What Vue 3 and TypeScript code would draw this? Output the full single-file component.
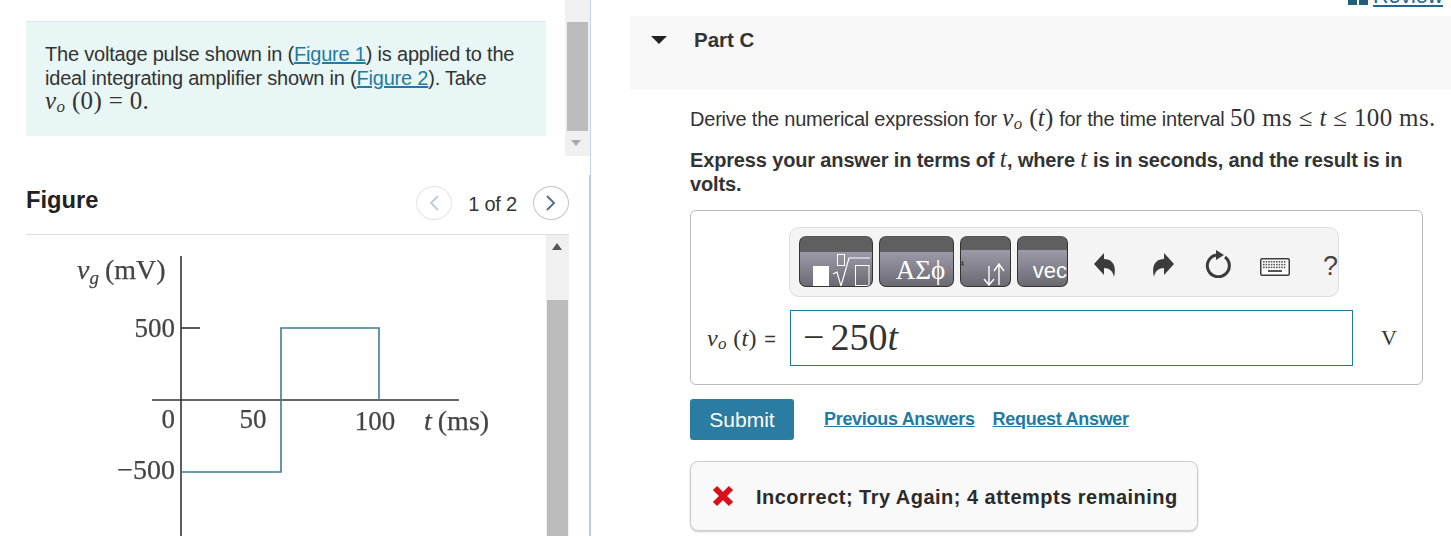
<script setup lang="ts">
// keyboard icon keys, drawn as rows of little squares
const keyRows: { x: number; y: number; w: number }[] = []
for (let r = 0; r < 3; r++) {
  for (let c = 0; c < 9; c++) {
    keyRows.push({ x: 3 + c * 2.6, y: 3 + r * 2.8, w: 1.6 })
  }
}
</script>

<template>
  <div class="page">
    <!-- left pane -->
    <div class="left">
      <div class="left-top">
        <div class="intro">
          <p>
            The voltage pulse shown in (<a href="#">Figure 1</a>) is applied to the<br />
            ideal integrating amplifier shown in (<a href="#">Figure 2</a>). Take<br />
            <span class="math"><i>v</i><sub><i>o</i></sub> (0) = 0.</span>
          </p>
        </div>
        <div class="scroll-a">
          <div class="scroll-a-thumb"></div>
          <div class="arrow-down"></div>
        </div>
      </div>

      <div class="left-bottom">
        <div class="fig-head">
          <h2>Figure</h2>
          <div class="pager">
            <span class="circle off">
              <svg width="12" height="18" viewBox="0 0 12 18"><path d="M10 2 L3 9 L10 16" fill="none" stroke="#c3cbd6" stroke-width="2" /></svg>
            </span>
            <span class="count">1 of 2</span>
            <span class="circle">
              <svg width="12" height="18" viewBox="0 0 12 18"><path d="M2 2 L9 9 L2 16" fill="none" stroke="#5b6f85" stroke-width="2" /></svg>
            </span>
          </div>
        </div>
        <div class="fig-body">
          <svg class="plot" width="520" height="301" viewBox="26 235 520 301">
            <g fill="none" stroke-width="1.6">
              <path d="M181 256 V536" stroke="#333" />
              <path d="M152 400 H459" stroke="#333" />
              <path d="M181 328 H200" stroke="#333" />
              <path d="M181 472 H281 V328 H379 V400" stroke="#3e7d92" />
            </g>
            <g class="plot-text" fill="#444" stroke="#444" stroke-width="0.25">
              <text x="77" y="279" font-size="28"><tspan font-style="italic">v</tspan><tspan font-style="italic" font-size="19" dy="5">g</tspan><tspan dy="-5" dx="6">(mV)</tspan></text>
              <text x="175" y="337" text-anchor="end" font-size="27">500</text>
              <text x="175" y="428" text-anchor="end" font-size="27">0</text>
              <text x="253" y="428" text-anchor="middle" font-size="27">50</text>
              <text x="375" y="430" text-anchor="middle" font-size="27">100</text>
              <text x="424" y="430" font-size="28"><tspan font-style="italic">t</tspan><tspan dx="6">(ms)</tspan></text>
              <text x="175" y="479" text-anchor="end" font-size="28">−500</text>
            </g>
          </svg>
          <div class="scroll-b">
            <div class="arrow-up"></div>
            <div class="scroll-b-thumb"></div>
          </div>
        </div>
      </div>
    </div>

    <!-- right pane -->
    <div class="right">
      <a class="review" href="#">
        <svg width="20" height="5" viewBox="0 0 20 5"><path d="M0 0 H9 V5 H0 Z M11 0 H20 V5 H11 Z" fill="#1f5f7a" /></svg>
        <span>Review</span>
      </a>

      <div class="part-head">
        <span class="caret"></span>
        <span class="part-title">Part C</span>
      </div>

      <div class="part-body">
        <p class="question">
          Derive the numerical expression for
          <span class="math"><i>v</i><sub><i>o</i></sub> (<i>t</i>)</span>
          for the time interval
          <span class="math">50 ms ≤ <i>t</i> ≤ 100 ms.</span>
        </p>
        <p class="express">
          Express your answer in terms of <span class="math normal"><i>t</i></span>, where
          <span class="math normal"><i>t</i></span> is in seconds, and the result is in volts.
        </p>

        <div class="answer">
          <div class="toolbar">
            <div class="btn b1">
              <svg width="74" height="36" viewBox="0 0 74 36">
                <rect x="14" y="16" width="16" height="20" fill="#fff" />
                <rect x="38.5" y="4.5" width="7" height="11" fill="none" stroke="#fff" />
                <path d="M34 24 L38 22 L42 36 L50 8 H71" fill="none" stroke="#fff" stroke-width="1.2" />
                <rect x="56.5" y="15.5" width="13.5" height="20" fill="none" stroke="#fff" />
              </svg>
            </div>
            <div class="btn b2"><span>ΑΣϕ</span></div>
            <div class="btn b3">
              <svg width="51" height="38" viewBox="0 0 51 38">
                <path d="M0 13 l3 3 M3 13 l-3 3 M1.5 12 v5" stroke="#333" stroke-width="0.7" />
                <path d="M28 17 V36 M23 30 L28 36 L33 30 M38 36 V15 M33 22 L38 15 L43 22" fill="none" stroke="#fff" stroke-width="1.4" />
              </svg>
            </div>
            <div class="btn b4"><span>vec</span></div>
            <div class="tools">
              <svg class="undo" width="22" height="26" viewBox="0 0 22 26"><path d="M0 12 L10 1 V7 C18 7 23 13 20 25 C19 19 15 16 10 16 V23 Z" fill="#3c3c3c" /></svg>
              <svg class="redo" width="22" height="26" viewBox="0 0 22 26"><path d="M22 12 L12 1 V7 C4 7 -1 13 2 25 C3 19 7 16 12 16 V23 Z" fill="#3c3c3c" /></svg>
              <svg class="reset" width="26" height="28" viewBox="0 0 26 28">
                <path d="M20 7 A11 11 0 1 1 11 5" fill="none" stroke="#3c3c3c" stroke-width="3" />
                <path d="M11 0 L19 5 L11 10 Z" fill="#3c3c3c" />
              </svg>
              <svg class="kbd" width="30" height="18" viewBox="0 0 30 18">
                <rect x="0.75" y="0.75" width="28.5" height="16.5" rx="1.5" fill="#fff" stroke="#3c3c3c" stroke-width="1.5" />
                <rect v-for="(k, i) in keyRows" :key="i" :x="k.x" :y="k.y" :width="k.w" :height="k.w" fill="#555" />
                <rect x="8" y="12" width="14" height="2" fill="#555" />
              </svg>
              <span class="help">?</span>
            </div>
          </div>

          <div class="input-row">
            <label class="math lbl"><i>v</i><sub><i>o</i></sub> (<i>t</i>) <span class="eq">=</span></label>
            <div class="input"><span class="minus">−</span>250<i>t</i></div>
            <span class="unit">V</span>
          </div>
        </div>

        <div class="actions">
          <button class="submit">Submit</button>
          <a href="#">Previous Answers</a>
          <a href="#">Request Answer</a>
        </div>

        <div class="feedback">
          <svg width="22" height="22" viewBox="0 0 22 22">
            <path d="M3 3 L19 19 M19 3 L3 19" stroke="#d9101a" stroke-width="6" />
          </svg>
          <span>Incorrect; Try Again; 4 attempts remaining</span>
        </div>
      </div>
    </div>
  </div>
</template>

<style>
html, body {
  margin: 0;
  background: #fff;
  overflow: hidden;
}
</style>

<style scoped>
.page {
  display: flex;
  width: 1451px;
  height: 536px;
  overflow: hidden;
  font-family: "Liberation Sans", Arial, sans-serif;
  font-size: 20px;
  color: #333;
  position: relative;
}

p, h2 {
  margin: 0;
}

a {
  color: #1f7ba3;
}

.math {
  font-family: "Liberation Serif", "Times New Roman", serif;
  font-size: 25px;
  line-height: 0;
  letter-spacing: 0.35px;
}

.math sub {
  font-size: 17px;
  line-height: 0;
  vertical-align: -3px;
}

.math.normal {
  font-weight: 400;
}

/* left pane */
.left {
  width: 591px;
  flex: none;
  display: flex;
  flex-direction: column;
}

.left-top {
  display: flex;
  height: 175px;
  box-sizing: border-box;
  border-right: 1px solid #c5d5e8;
}

.intro {
  width: 520px;
  height: 115px;
  margin: 21px 0 0 26px;
  box-sizing: border-box;
  padding: 20px 20px 0 19px;
  background: #e8f6f6;
  border-top: 1px solid #dbe8ee;
  line-height: 24px;
  letter-spacing: -0.2px;
}

.scroll-a {
  width: 25px;
  height: 156px;
  margin-left: 19px;
  background: #f0f0f0;
  padding-top: 22px;
  box-sizing: border-box;
}

.scroll-a-thumb {
  width: 21px;
  height: 109px;
  margin-left: 2px;
  background: #bcbcbc;
}

.arrow-down {
  width: 0;
  height: 0;
  margin: 9px 0 0 6px;
  border-left: 5.5px solid transparent;
  border-right: 5.5px solid transparent;
  border-top: 6px solid #aaa;
}

.left-bottom {
  flex: 1;
  border-right: 2px solid #b9cce4;
  box-sizing: border-box;
  padding-left: 26px;
  min-height: 0;
}

.fig-head {
  width: 543px;
  height: 60px;
  box-sizing: border-box;
  padding-top: 11px;
  display: flex;
  justify-content: space-between;
  align-items: flex-start;
  border-bottom: 1px solid #ddd;
}

.fig-head h2 {
  font-size: 23.7px;
  line-height: 28px;
  color: #222;
}

.pager {
  display: flex;
  align-items: center;
  gap: 16px;
}

.circle {
  width: 36px;
  height: 34px;
  box-sizing: border-box;
  border: 1px solid #c4c4c4;
  border-radius: 50%;
  display: flex;
  align-items: center;
  justify-content: center;
}

.circle.off {
  border-color: #e4e4e4;
}

.count {
  letter-spacing: -0.2px;
  color: #333;
  padding-top: 2px;
}

.fig-body {
  display: flex;
  width: 543px;
}

.plot {
  display: block;
  flex: none;
  filter: blur(0.4px);
}

.plot-text {
  font-family: "Liberation Serif", "Times New Roman", serif;
}

.scroll-b {
  width: 23px;
  height: 301px;
  background: #f0f0f0;
  box-sizing: border-box;
  padding-top: 8px;
}

.arrow-up {
  width: 0;
  height: 0;
  margin-left: 6px;
  border-left: 5.5px solid transparent;
  border-right: 5.5px solid transparent;
  border-bottom: 7px solid #555;
}

.scroll-b-thumb {
  width: 21px;
  height: 240px;
  margin: 50px 0 0 1px;
  background: #bcbcbc;
}

/* right pane */
.right {
  flex: 1;
  padding-left: 39px;
  min-width: 0;
}

.review {
  position: absolute;
  top: -15px;
  right: 8px;
  display: flex;
  align-items: flex-end;
  gap: 5px;
  font-size: 21.5px;
  line-height: 23px;
  color: #1f6a8c;
  letter-spacing: -0.1px;
}

.review svg {
  margin-bottom: 3px;
}

.part-head {
  height: 74px;
  margin-top: 16px;
  background: #f8f8f8;
  display: flex;
  align-items: flex-start;
  box-sizing: border-box;
  padding-top: 12px;
}

.caret {
  width: 0;
  height: 0;
  margin: 8px 27px 0 21px;
  border-left: 8px solid transparent;
  border-right: 8px solid transparent;
  border-top: 8px solid #222;
}

.part-title {
  font-weight: 700;
  font-size: 20.5px;
  line-height: 24px;
}

.part-body {
  padding: 17px 0 0 60px;
}

.question {
  line-height: 24px;
  white-space: nowrap;
  letter-spacing: -0.22px;
}

.express {
  margin-top: 17px;
  width: 720px;
  font-weight: 700;
  line-height: 24px;
  letter-spacing: -0.15px;
}

.answer {
  width: 733px;
  height: 175px;
  margin-top: 14px;
  box-sizing: border-box;
  border: 1px solid #bbb;
  border-radius: 6px;
  padding: 16px 0 0 16px;
}

.toolbar {
  width: 550px;
  height: 70px;
  margin-left: 82px;
  box-sizing: border-box;
  background: #f4f4f4;
  border: 1px solid #ddd;
  border-radius: 10px;
  padding: 8px 0 0 9px;
  display: flex;
  gap: 6px;
}

.btn {
  position: relative;
  flex: none;
  height: 51px;
  box-sizing: border-box;
  border: 1px solid #333;
  border-top-color: #555;
  border-radius: 7px;
  overflow: hidden;
  display: flex;
  align-items: flex-end;
  color: #fff;
  background: linear-gradient(#5f5f5f 0 15px, #9c9aa8 15px, #6b6a72 100%);
}

.b1 {
  width: 74px;
}

.b1 svg {
  margin-left: -1px;
  flex: none;
}

.b2 {
  width: 75px;
  justify-content: center;
  font-family: "Liberation Serif", "Times New Roman", serif;
  font-size: 27px;
  line-height: 32px;
  padding-left: 8px;
}

.b3, .b4 {
  width: 51px;
  background: linear-gradient(#5f5f5f 0 13px, #9c9aa8 13px, #6b6a72 100%);
}

.b3 svg {
  margin-bottom: -1px;
  flex: none;
}

.b4 {
  justify-content: flex-end;
  font-size: 22px;
  line-height: 30px;
}

.tools {
  display: flex;
  align-items: center;
  height: 51px;
  margin-top: 2px;
}

.undo {
  margin: 3px 0 0 20px;
}

.redo {
  margin: 3px 0 0 36px;
}

.reset {
  margin: 0 0 0 31px;
}

.kbd {
  margin: 7px 0 0 29px;
}

.help {
  margin: 4px 0 0 33px;
  font-size: 27px;
  line-height: 30px;
  color: #444;
}

.input-row {
  display: flex;
  align-items: center;
  height: 56px;
  margin-top: 13px;
}

.lbl {
  width: 83px;
  flex: none;
  font-size: 24px;
  line-height: 30px;
  white-space: nowrap;
}

.eq {
  font-family: "Liberation Sans", Arial, sans-serif;
  font-size: 20px;
  margin-left: 1px;
}

.input {
  width: 563px;
  height: 56px;
  flex: none;
  box-sizing: border-box;
  border: 1px solid #1f7ba3;
  padding-left: 12px;
  font-family: "Liberation Serif", "Times New Roman", serif;
  font-size: 38px;
  line-height: 52px;
}

.minus {
  margin-right: 6px;
}

.unit {
  margin-left: 28px;
  font-family: "Liberation Serif", "Times New Roman", serif;
  font-size: 22px;
}

.actions {
  display: flex;
  align-items: flex-start;
  margin-top: 14px;
  font-size: 18px;
  font-weight: 700;
}

.submit {
  width: 104px;
  height: 41px;
  border: none;
  border-radius: 3px;
  background: #2a7ca2;
  color: #fff;
  font-family: inherit;
  font-size: 21px;
  padding: 0;
  margin-right: 30px;
}

.actions a {
  margin-top: 9px;
  line-height: 22px;
  margin-right: 18px;
  letter-spacing: -0.3px;
}

.feedback {
  width: 508px;
  height: 70px;
  margin-top: 21px;
  box-sizing: border-box;
  background: #f9f9f9;
  border: 1px solid #ccc;
  border-radius: 8px;
  box-shadow: 0 1px 2px rgba(0, 0, 0, 0.2);
  display: flex;
  align-items: center;
  padding-left: 21px;
  gap: 22px;
  font-weight: 700;
  color: #2b2b2b;
  letter-spacing: 0.48px;
}

.feedback span {
  padding-top: 2px;
}
</style>
